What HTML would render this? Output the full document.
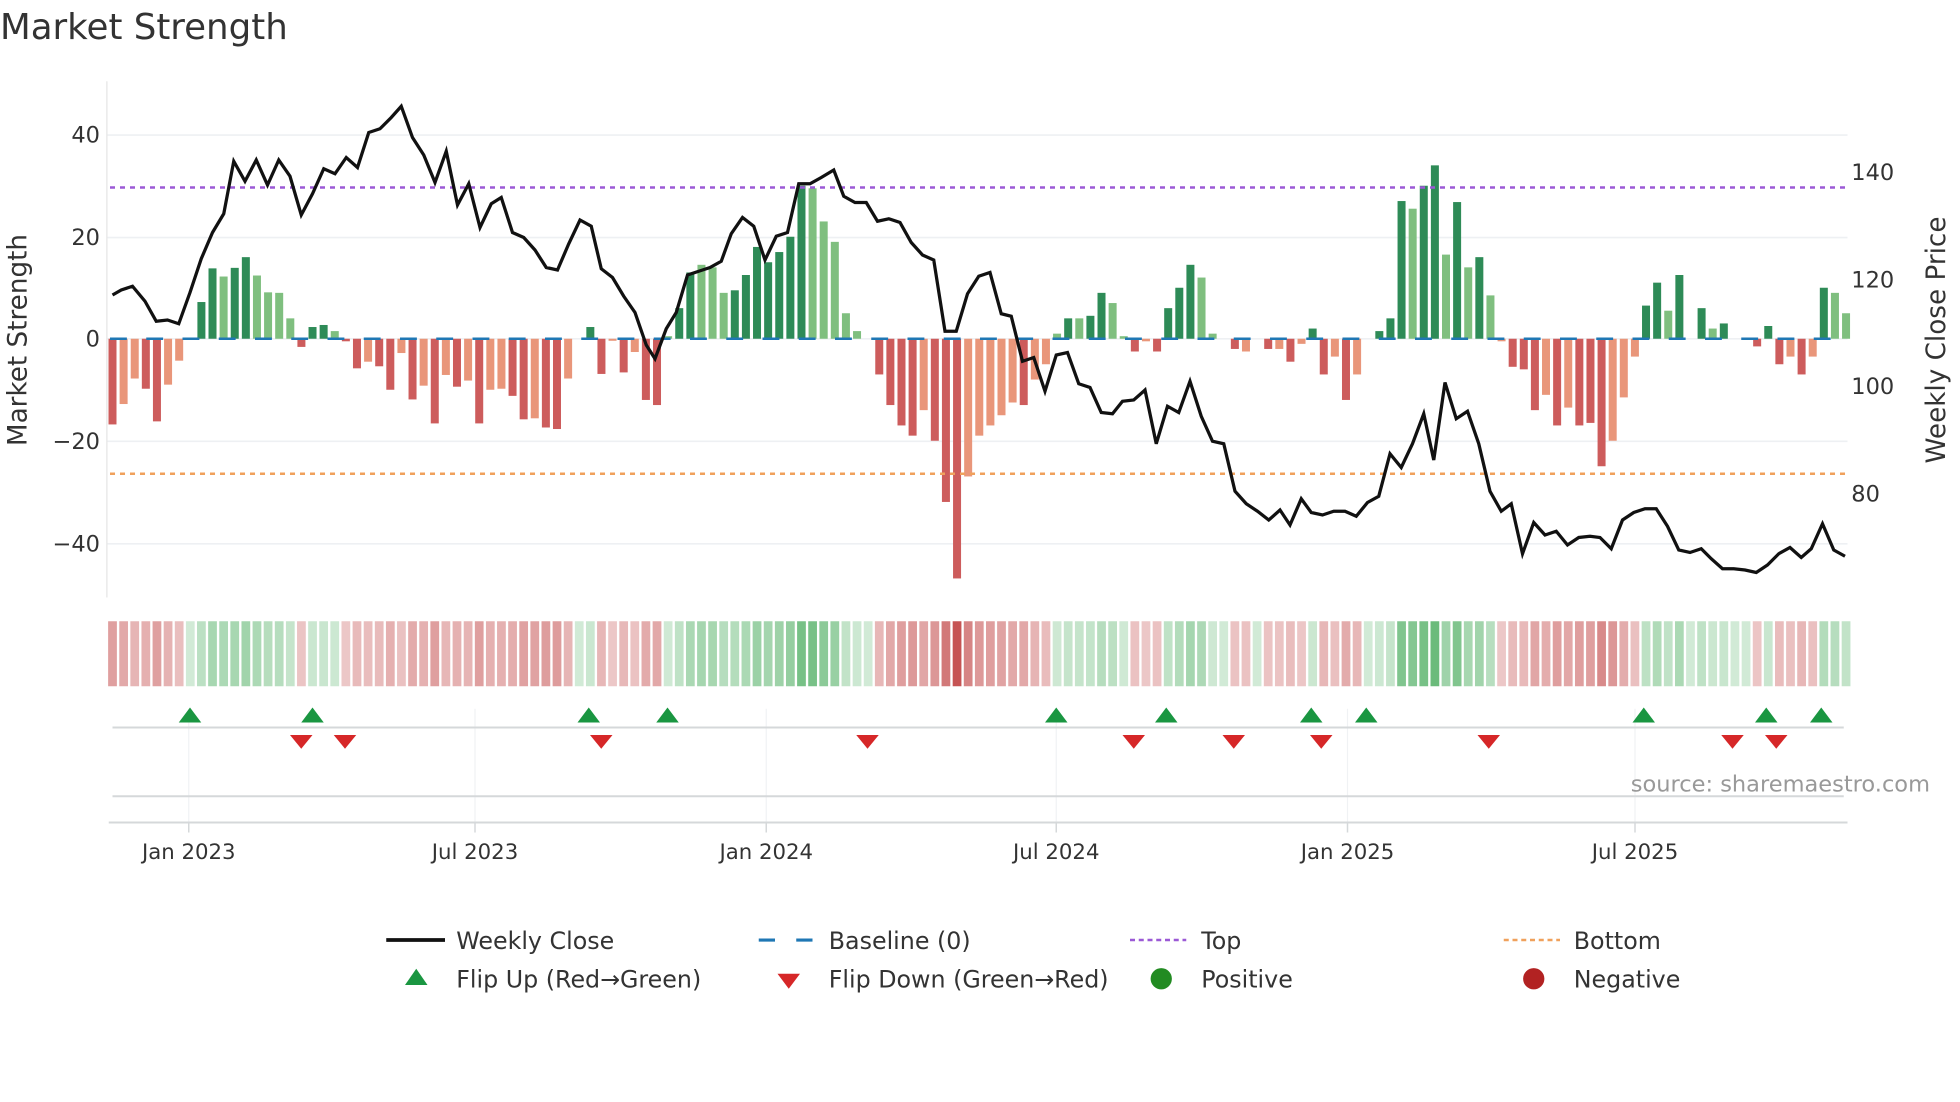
<!DOCTYPE html>
<html><head><meta charset="utf-8"><style>
html,body{margin:0;padding:0;background:#fff;}
svg{display:block;font-family:"DejaVu Sans","Liberation Sans",sans-serif;}
</style></head><body>
<svg id="c" width="1960" height="1102" viewBox="0 0 1568 881.6" xmlns="http://www.w3.org/2000/svg">
<rect width="1568" height="882" fill="#fff"/>
<text x="0" y="31" font-size="28.5" fill="#333">Market Strength</text>
<g stroke="#eef0f3" stroke-width="1.3">
<line x1="86" y1="108" x2="1478" y2="108"/><line x1="86" y1="190" x2="1478" y2="190"/>
<line x1="86" y1="353" x2="1478" y2="353"/><line x1="86" y1="435" x2="1478" y2="435"/>
<line x1="86" y1="271" x2="1478" y2="271"/>
</g>
<line x1="85.5" y1="65" x2="85.5" y2="478" stroke="#e6e6e6" stroke-width="1"/>
<g font-size="18" fill="#333" text-anchor="end">
<text x="80" y="114">40</text><text x="80" y="196">20</text><text x="80" y="277">0</text>
<text x="80" y="359">−20</text><text x="80" y="441">−40</text>
</g>
<g font-size="18" fill="#333">
<text x="1481" y="144">140</text><text x="1481" y="230">120</text><text x="1481" y="315">100</text><text x="1481" y="401">80</text>
</g>
<text transform="translate(21,272) rotate(-90)" font-size="21" fill="#333" text-anchor="middle">Market Strength</text>
<text transform="translate(1556,272) rotate(-90)" font-size="21" fill="#333" text-anchor="middle">Weekly Close Price</text>
<g id="bars"></g>
<line x1="88" y1="271" x2="1476" y2="271" stroke="#1f77b4" stroke-width="2" stroke-dasharray="13.5 15.5"/>
<line x1="88" y1="150" x2="1476" y2="150" stroke="#9b59d6" stroke-width="2" stroke-dasharray="4 4"/>
<line x1="88" y1="379" x2="1476" y2="379" stroke="#f0a15c" stroke-width="2" stroke-dasharray="4 4"/>
<polyline id="price" fill="none" stroke="#111" stroke-width="2.6" stroke-linejoin="miter"/>
<g id="heat"></g>
<g stroke="#f0f2f4" stroke-width="1">
<line x1="151" y1="567" x2="151" y2="658"/><line x1="380" y1="567" x2="380" y2="658"/><line x1="613" y1="567" x2="613" y2="658"/>
<line x1="845" y1="567" x2="845" y2="658"/><line x1="1078" y1="567" x2="1078" y2="658"/><line x1="1308" y1="567" x2="1308" y2="658"/>
</g>
<line x1="90" y1="582" x2="1475" y2="582" stroke="#d5d8da" stroke-width="1.6"/>
<line x1="90" y1="637" x2="1475" y2="637" stroke="#d5d8da" stroke-width="1.6"/>
<line x1="87" y1="658" x2="1478" y2="658" stroke="#d5d8da" stroke-width="1.6"/>
<g id="flips"></g>
<g stroke="#d5d8da" stroke-width="1.2">
<line x1="151" y1="658" x2="151" y2="666"/><line x1="380" y1="658" x2="380" y2="666"/><line x1="613" y1="658" x2="613" y2="666"/>
<line x1="845" y1="658" x2="845" y2="666"/><line x1="1078" y1="658" x2="1078" y2="666"/><line x1="1308" y1="658" x2="1308" y2="666"/>
</g>
<g font-size="17" fill="#333" text-anchor="middle">
<text x="151" y="687">Jan 2023</text><text x="380" y="687">Jul 2023</text><text x="613" y="687">Jan 2024</text>
<text x="845" y="687">Jul 2024</text><text x="1078" y="687">Jan 2025</text><text x="1308" y="687">Jul 2025</text>
</g>
<text x="1544" y="633" font-size="18" fill="#999" text-anchor="end">source: sharemaestro.com</text>
<g font-size="19" fill="#333">
<line x1="309" y1="752" x2="356" y2="752" stroke="#111" stroke-width="3"/>
<text x="365" y="759">Weekly Close</text>
<line x1="607" y1="752" x2="652" y2="752" stroke="#1f77b4" stroke-width="2.5" stroke-dasharray="13 17"/>
<text x="663" y="759">Baseline (0)</text>
<line x1="904" y1="752" x2="949" y2="752" stroke="#9b59d6" stroke-width="2" stroke-dasharray="4 3"/>
<text x="961" y="759">Top</text>
<line x1="1203" y1="752" x2="1248" y2="752" stroke="#f0a15c" stroke-width="2" stroke-dasharray="4 3"/>
<text x="1259" y="759">Bottom</text>
<polygon points="324,788 342,788 333,775" fill="#1a9641"/>
<text x="365" y="790">Flip Up (Red→Green)</text>
<polygon points="622,779 640,779 631,791" fill="#d62728"/>
<text x="663" y="790">Flip Down (Green→Red)</text>
<circle cx="929" cy="783" r="8.5" fill="#228b22"/>
<text x="961" y="790">Positive</text>
<circle cx="1227" cy="783" r="8.5" fill="#b22222"/>
<text x="1259" y="790">Negative</text>
</g>
</svg>
<script>
var V=[[-16.8,1],[-12.8,0],[-7.8,0],[-9.8,1],[-16.2,1],[-9,0],[-4.3,0],[0,0],[7.2,1],[13.8,1],[12.2,0],[13.9,1],[16,1],[12.4,0],[9.1,0],[9,0],[4,0],[-1.6,1],[2.3,1],[2.7,1],[1.5,0],[-0.5,1],[-5.8,1],[-4.5,0],[-5.4,1],[-10,1],[-2.8,0],[-11.9,1],[-9.2,0],[-16.6,1],[-7.1,0],[-9.4,1],[-8.2,0],[-16.6,1],[-10,0],[-9.8,0],[-11.2,1],[-15.8,1],[-15.6,0],[-17.4,1],[-17.7,1],[-7.8,0],[0,0],[2.3,1],[-6.9,1],[-0.4,0],[-6.6,1],[-2.6,0],[-12,1],[-13,1],[0.5,0],
[6,1],[13,1],[14.5,0],[14,0],[9,0],[9.5,1],[12.5,1],[18,1],[15,1],[17,1],[20,1],[30,1],[29.5,0],[23,0],[19,0],[5,0],[1.5,0],[0,0],[-7,1],[-13,1],
[-17,1],[-19,1],[-14,0],[-20,1],[-32,1],[-47,1],[-27,0],[-19,0],[-17,0],[-15,0],
[-12.5,0],[-13,1],[-8,0],[-5,0],[1,0],[4,1],[4,0],[4.5,1],[9,1],[7,0],
[0.5,0],[-2.5,1],[-0.5,0],[-2.5,1],[6,1],[10,1],[14.5,1],[12,0],[1,0],[0,0],
[-2,1],[-2.5,0],[0,0],[-2,1],[-2,0],[-4.5,1],[-1,0],[2,1],[-7,1],[-3.5,0],
[-12,1],[-7,0],[0,0],[1.5,1],[4,1],[27,1],[25.5,0],[30,1],[34,1],[16.5,0],
[26.8,1],[14,0],[16,1],[8.5,0],
[-0.5,0],[-5.5,1],[-6,1],[-14,1],[-11,0],[-17,1],[-13.5,0],[-17,1],[-16.5,1],[-25,1],
[-20,0],[-11.5,0],[-3.5,0],[6.5,1],[11,1],[5.5,0],[12.5,1],[0,0],[6,1],[2,0],
[3,1],[0,0],[0,0],[-1.5,1],[2.5,1],[-5,1],[-3.5,0],[-7,1],[-3.5,0],[10,1],
[9,0],[5,0]];
var ns="http://www.w3.org/2000/svg",b=document.getElementById('bars'),h=document.getElementById('heat');
function el(t,a,p){var e=document.createElementNS(ns,t);for(var k in a)e.setAttribute(k,a[k]);p.appendChild(e);return e;}
function mix(c,t){return 'rgb('+c.map(function(v){return Math.round(255+(v-255)*t)}).join(',')+')';}
for(var i=0;i<V.length;i++){
 var x=90+8.89*i,v=V[i][0],d=V[i][1];
 if(v!==0){var y0=271,y1=271-v*4.08;
  var col=v>0?(d?'#2e8b57':'#7fbf7f'):(d?'#cd5c5c':'#e9967a');
  el('rect',{x:x-3.2,y:Math.min(y0,y1),width:6.4,height:Math.abs(y1-y0),fill:col},b);}
 var t,c;
 if(v>=0){t=0.25+0.55*Math.min(v/34,1);c=[70,170,90];}else{t=0.28+0.6*Math.min(-v/47,1);c=[190,60,60];}
 el('rect',{x:x-3.5,y:497,width:7,height:52,fill:mix(c,t)},h);
}
var P=[[90,236],[97,232],[106,229],[116,241],[125,257],[134,256],[143,259],[152,234],[161,207],[170,186],[179,171],[187,129],[196,145],[205,128],[214,148],[223,128],[232,141],[241,172],[250,155],[259,135],[268,139],[277,126],[286,134],[295,106],[304,103],[313,94],[321,85],[330,110],[339,124],[348,146],[357,121],[366,164],[375,147],[384,182],[393,163],[401,158],[410,186],[419,190],[428,200],[437,214],[446,216],[455,195],[464,176],[473,181],[481,215],[490,222],[499,237],[508,250],[517,276],[524,287],[533,263],[541,250],[550,220],[559,217],[568,214],[577,209],[585,187],[594,174],[603,181],[612,208],[621,189],[630,186],[639,147],[648,147],[657,142],[667,136],[675,157],[684,162],[693,162],[702,177],[711,175],[720,178],[729,194],[738,204],[747,208],[756,265],[765,265],[774,235],[783,221],[792,218],[801,251],[809,253],[818,289],[827,286],[836,313],[845,284],[854,282],[863,307],[872,310],[881,330],[890,331],[898,321],[907,320],[916,312],[925,355],[934,325],[943,330],[952,305],[961,333],[970,353],[979,355],[988,393],[997,403],[1006,409],[1015,416],[1024,408],[1032,420],[1041,399],[1049,410],[1058,412],[1067,409],[1076,409],[1085,413],[1094,402],[1103,397],[1112,363],[1121,374],[1130,355],[1139,331],[1147,368],[1156,306],[1165,335],[1174,329],[1183,355],[1192,393],[1201,409],[1209,403],[1218,443],[1227,418],[1236,428],[1245,425],[1254,436],[1263,430],[1272,429],[1280,430],[1289,439],[1298,416],[1307,410],[1316,407],[1325,407],[1334,421],[1343,440],[1352,442],[1361,439],[1369,447],[1378,455],[1387,455],[1396,456],[1405,458],[1414,452],[1423,443],[1432,438],[1441,446],[1449,439],[1458,419],[1467,440],[1476,445]];
document.getElementById('price').setAttribute('points',P.map(function(p){return p.join(',')}).join(' '));
var f=document.getElementById('flips');
[152,250,471,534,845,933,1049,1093,1315,1413,1457].forEach(function(x){el('polygon',{points:(x-9)+',578 '+(x+9)+',578 '+x+',566',fill:'#1a9641'},f);});
[241,276,481,694,907,987,1057,1191,1386,1421].forEach(function(x){el('polygon',{points:(x-9)+',588 '+(x+9)+',588 '+x+',599',fill:'#d62728'},f);});
</script>
</body></html>
